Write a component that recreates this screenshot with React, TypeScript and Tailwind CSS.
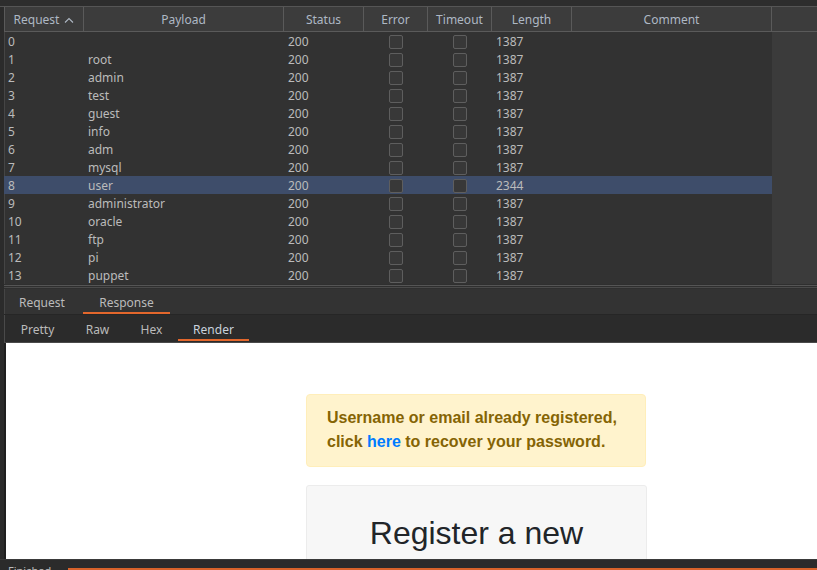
import React from "react";

const rows: [string, string, string][] = [
  ["0", "", "1387"],
  ["1", "root", "1387"],
  ["2", "admin", "1387"],
  ["3", "test", "1387"],
  ["4", "guest", "1387"],
  ["5", "info", "1387"],
  ["6", "adm", "1387"],
  ["7", "mysql", "1387"],
  ["8", "user", "2344"],
  ["9", "administrator", "1387"],
  ["10", "oracle", "1387"],
  ["11", "ftp", "1387"],
  ["12", "pi", "1387"],
  ["13", "puppet", "1387"],
];

const cols = "grid grid-cols-[80px_200px_80px_64px_64px_80px_200px]";

function Box() {
  return <div className="w-[14px] h-[14px] rounded-[2px] border border-[#5e5e5e] bg-[#383838]" />;
}

export default function App() {
  return (
    <div
      className="w-[817px] h-[570px] overflow-hidden bg-[#2b2b2b] flex flex-col text-[12px] text-[#bbbbbb]"
      style={{ fontFamily: '"Noto Sans", "DejaVu Sans", sans-serif' }}
    >
      {/* top strip */}
      <div className="h-[7px] shrink-0 bg-[#2d2d2d] border-b border-[#555555]" />
      {/* table */}
      <div className="flex flex-col shrink-0 pl-[4px] bg-[#2b2b2b]">
        {/* header */}
        <div className="flex h-[25px] bg-[#3c3c3c] border-b border-[#5a5a5a] text-[#aeb8c4]">
          <div className={`${cols} w-[768px]`}>
            <div className="flex items-center justify-center gap-[5px] pt-[2px] border-l border-r border-[#5a5a5a]">
              <span>Request</span>
              <svg width="10" height="6" viewBox="0 0 10 6" fill="none">
                <path d="M1 5.5L5 1.5L9 5.5" stroke="#aeb8c4" strokeWidth="1.1" />
              </svg>
            </div>
            <div className="flex items-center justify-center pt-[2px] border-r border-[#5a5a5a]">Payload</div>
            <div className="flex items-center justify-center pt-[2px] border-r border-[#5a5a5a]">Status</div>
            <div className="flex items-center justify-center pt-[2px] border-r border-[#5a5a5a]">Error</div>
            <div className="flex items-center justify-center pt-[2px] border-r border-[#5a5a5a]">Timeout</div>
            <div className="flex items-center justify-center pt-[2px] border-r border-[#5a5a5a]">Length</div>
            <div className="flex items-center justify-center pt-[2px] border-r border-[#5a5a5a]">Comment</div>
          </div>
          <div className="flex-1" />
        </div>
        {/* body */}
        <div className="flex h-[252px] bg-[#3b3b3b]">
          <div className="w-[768px] bg-[#323232] border-l border-[#454545] flex flex-col">
            {rows.map(([n, p, l]) => (
              <div
                key={n}
                className={`${cols} h-[18px] shrink-0 items-center pt-[1px] -ml-px ${n === "8" ? "bg-[#3e4d6a]" : ""}`}
              >
                <div className="pl-[4px]">{n}</div>
                <div className="pl-[4px]">{p}</div>
                <div className="pl-[4px]">200</div>
                <div className="flex justify-center -mt-[1px]"><Box /></div>
                <div className="flex justify-center -mt-[1px]"><Box /></div>
                <div className="pl-[4px]">{l}</div>
                <div />
              </div>
            ))}
          </div>
          <div className="flex-1" />
        </div>
        <div className="h-[5px] bg-[#2f2f2f] flex flex-col justify-center gap-[1px]">
          <div className="h-px bg-[#555555]" />
          <div className="h-px bg-[#4a4a4a]" />
        </div>
      </div>
      {/* response tabs */}
      <div className="flex flex-col shrink-0 pl-[4px]">
        <div className="h-[25px] bg-[#333333] flex items-stretch border-l border-[#454545]">
          <div className="w-[78px] pl-[14px] pt-[2px] flex items-center">Request</div>
          <div className="w-[87px] pt-[2px] flex items-center justify-center relative">
            Response
            <div className="absolute left-0 right-0 bottom-0 h-[2px] bg-[#e3672c]" />
          </div>
        </div>
        <div className="h-px bg-[#262626]" />
        <div className="h-[28px] bg-[#2b2b2b] flex items-stretch border-b border-[#4a4a4a] border-l">
          <div className="w-[65px] pt-[3px] flex items-center justify-center">Pretty</div>
          <div className="w-[55px] pt-[3px] flex items-center justify-center">Raw</div>
          <div className="w-[53px] pt-[3px] flex items-center justify-center">Hex</div>
          <div className="w-[71px] pt-[3px] flex items-center justify-center relative text-[#c9d2dc]">
            Render
            <div className="absolute left-0 right-0 bottom-[1px] h-[2px] bg-[#e3672c]" />
          </div>
        </div>
      </div>
      {/* render area */}
      <div className="flex h-[216px] shrink-0 pl-[4px]">
        <div className="w-[2px] bg-[#1f1f1f]" />
        <div
          className="flex-1 bg-white flex flex-col items-start pl-[300px] pt-[51px] overflow-hidden"
          style={{ fontFamily: '"Liberation Sans", Arial, sans-serif' }}
        >
          <div className="shrink-0 w-[340px] h-[73px] bg-[#fff3cd] border border-[#ffeeba] rounded-[4px] pl-[20px] pt-[11px] text-[16px] font-bold leading-[24px] text-[#856404]">
            Username or email already registered,
            <br />
            click <span className="text-[#007bff]">here</span> to recover your password.
          </div>
          <div className="shrink-0 mt-[18px] w-[341px] h-[100px] bg-[#f7f7f7] border border-[#ececec] rounded-[3px] flex justify-center pt-[27px] text-[32px] text-[#212529] leading-[40px]">
            Register a new
          </div>
        </div>
      </div>
      {/* status bar */}
      <div className="flex-1 bg-[#2b2b2b] border-t border-[#3a3a3a] relative overflow-hidden">
        <div className="absolute left-[8px] top-[5px] text-[11px] text-[#bbbbbb] leading-[12px]">Finished</div>
        <div className="absolute left-[68px] right-0 top-[8px] h-[8px] bg-[#d8622b]" />
      </div>
    </div>
  );
}
